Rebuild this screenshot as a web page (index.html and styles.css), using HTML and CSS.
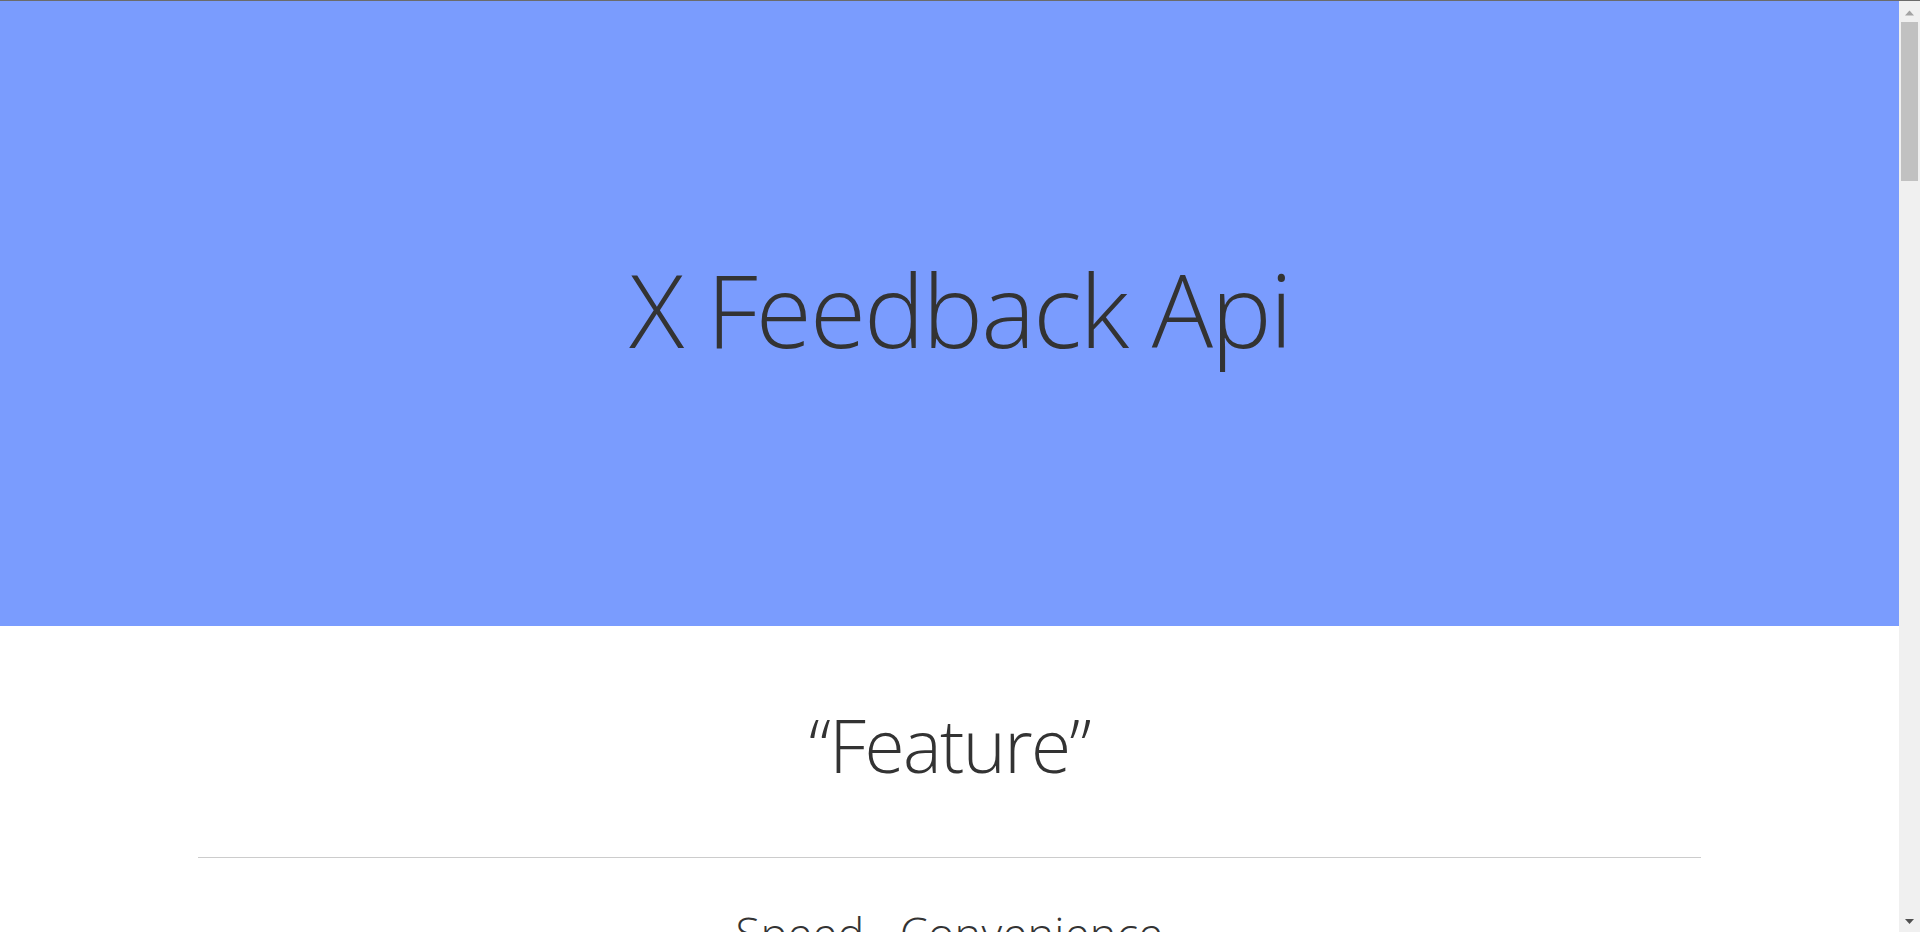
FILE: index.html
```html
<!DOCTYPE html>
<html lang="en">
<head>
<meta charset="utf-8">
<title>X Feedback Api</title>
<link rel="stylesheet" href="styles.css">
</head>
<body>
<div class="frame">
  <div class="topline"></div>
  <div class="window">
    <div class="page">
      <header class="hero">
        <h1 class="hero-title">X Feedback Api</h1>
      </header>
      <main class="content">
        <section class="features">
          <h2 class="section-title">“Feature”</h2>
          <div class="divider"></div>
          <h3 class="feature-name">Speed · Convenience</h3>
          <p class="feature-text">Collect feedback from your users in seconds with a single request.</p>
          <h3 class="feature-name">Simple · Flexible</h3>
          <p class="feature-text">Plug the API into any app and shape the data the way you need.</p>
        </section>
      </main>
    </div>
    <div class="scrollbar" aria-hidden="true">
      <div class="sb-btn">
        <svg width="21" height="21" viewBox="0 0 21 21"><path d="M6 14.5h9l-4.5-5z" fill="#a3a3a3"/></svg>
      </div>
      <div class="sb-track">
        <div class="sb-thumb"></div>
      </div>
      <div class="sb-btn">
        <svg width="21" height="21" viewBox="0 0 21 21"><path d="M6 8h9l-4.5 5z" fill="#505050"/></svg>
      </div>
    </div>
  </div>
</div>
</body>
</html>
```

FILE: styles.css
```css
html, body {
  margin: 0;
  padding: 0;
  height: 100%;
  overflow: hidden;
}

body {
  font-family: "Open Sans", "Noto Sans", sans-serif;
  font-weight: 300;
  color: #333333;
  background: #ffffff;
}

.frame {
  display: flex;
  flex-direction: column;
  height: 932px;
}

.topline {
  flex: 0 0 1px;
  background: #6b6b6b;
}

.window {
  flex: 1 1 auto;
  min-height: 0;
  display: flex;
}

.page {
  flex: 1 1 auto;
  min-width: 0;
  overflow: hidden;
}

.scrollbar {
  flex: 0 0 21px;
  display: flex;
  flex-direction: column;
  background: #f0f0f0;
}

.sb-btn {
  flex: 0 0 21px;
  display: flex;
}

.sb-track {
  flex: 1 1 auto;
  padding: 0 2px;
}

.sb-thumb {
  height: 159px;
  background: #c1c1c1;
}

.hero {
  width: 1920px;
  height: 625px;
  background: #7a9cfe;
  display: flex;
  align-items: center;
  justify-content: center;
  padding-bottom: 10px;
  box-sizing: border-box;
}

.hero-title {
  margin: 0;
  font-size: 102px;
  line-height: 1;
  font-weight: 300;
  letter-spacing: -2px;
  color: #333333;
}

.features {
  text-align: center;
}

.section-title {
  margin: 82px 0 0;
  font-size: 73px;
  line-height: 1;
  font-weight: 300;
  letter-spacing: -1.6px;
}

.divider {
  width: 1503px;
  margin: 76px auto 0;
  border-top: 1px solid #cccccc;
}

.feature-name {
  margin: 52px 0 0;
  font-size: 45px;
  line-height: 1;
  font-weight: 300;
  letter-spacing: 0.3px;
}

.feature-text {
  margin: 20px 0 0;
  font-size: 20px;
  line-height: 1.5;
}
```
